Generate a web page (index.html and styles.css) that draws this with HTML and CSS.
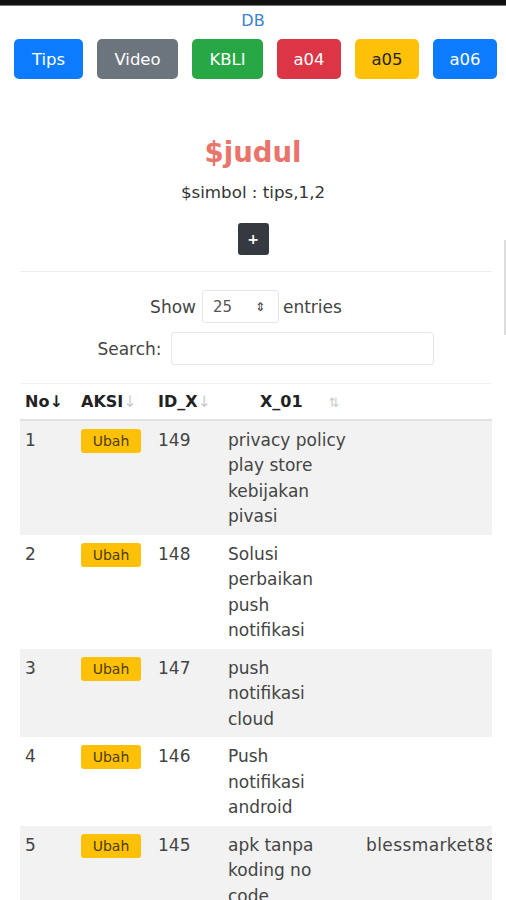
FILE: index.html
```html
<!DOCTYPE html>
<html>
<head>
<meta charset="utf-8">
<link rel="stylesheet" href="styles.css">
</head>
<body>
<div class="topbar"></div>
<div class="scroll-ind"></div>
<div class="page">
  <div class="db">DB</div>
  <nav class="btns">
    <a class="btn b-blue w-tips">Tips</a>
    <a class="btn b-grey w-video">Video</a>
    <a class="btn b-green w-kbli">KBLI</a>
    <a class="btn b-red w-a">a04</a>
    <a class="btn b-yellow w-a">a05</a>
    <a class="btn b-blue w-a">a06</a>
  </nav>
  <h2 class="judul">$judul</h2>
  <p class="simbol">$simbol : tips,1,2</p>
  <div class="plus-wrap"><button class="plus">+</button></div>
  <hr class="sep">
  <div class="length">
    <span>Show</span>
    <div class="select"><span>25</span><span class="caret">&#8661;</span></div>
    <span>entries</span>
  </div>
  <div class="search">
    <span>Search:</span>
    <div class="input"></div>
  </div>
  <div class="table-wrap">
    <table class="tbl">
      <thead>
        <tr>
          <th class="c-no">No<span class="arr on">&#8595;</span></th>
          <th class="c-aksi">AKSI<span class="arr">&#8595;</span></th>
          <th class="c-id">ID_X<span class="arr">&#8595;</span></th>
          <th class="c-x01"><span class="x01">X_01</span><span class="arr both">&#8645;</span></th>
          <th class="c-x02"></th>
        </tr>
      </thead>
      <tbody>
        <tr class="odd">
          <td>1</td><td><span class="badge">Ubah</span></td><td>149</td>
          <td class="txt">privacy policy play store kebijakan pivasi</td><td></td>
        </tr>
        <tr>
          <td>2</td><td><span class="badge">Ubah</span></td><td>148</td>
          <td class="txt">Solusi perbaikan push notifikasi</td><td></td>
        </tr>
        <tr class="odd">
          <td>3</td><td><span class="badge">Ubah</span></td><td>147</td>
          <td class="txt">push notifikasi cloud</td><td></td>
        </tr>
        <tr>
          <td>4</td><td><span class="badge">Ubah</span></td><td>146</td>
          <td class="txt">Push notifikasi android</td><td></td>
        </tr>
        <tr class="odd">
          <td>5</td><td><span class="badge">Ubah</span></td><td>145</td>
          <td class="txt">apk tanpa koding no code</td><td class="nowrap">blessmarket88</td>
        </tr>
      </tbody>
    </table>
  </div>
</div>
</body>
</html>
```

FILE: styles.css
```css
* { box-sizing: border-box; }
html, body { margin: 0; padding: 0; background: #fff; }
body {
  font-family: "DejaVu Sans", "Liberation Sans", sans-serif;
  color: #333;
  width: 506px;
  height: 900px;
  overflow: hidden;
  position: relative;
}
.topbar {
  height: 6px;
  background: #111;
  border-bottom: 1px solid #777;
}
.scroll-ind {
  position: absolute;
  left: 504px;
  top: 240px;
  width: 2px;
  height: 95px;
  background: #ddd;
}
.page { display: flex; flex-direction: column; }
.db {
  text-align: center;
  color: #3b82d6;
  font-size: 16px;
  line-height: 20px;
  margin-top: 5px;
}
.btns {
  display: flex;
  gap: 14px;
  padding-left: 14px;
  margin-top: 8px;
}
.btn {
  height: 40px;
  border-radius: 5px;
  display: flex;
  align-items: center;
  justify-content: center;
  font-size: 16.5px;
  color: #fff;
}
.w-tips { width: 69px; }
.w-video { width: 81px; }
.w-kbli { width: 71px; }
.w-a { width: 64px; }
.b-blue { background: #0d7bfd; }
.b-grey { background: #6c757d; }
.b-green { background: #28a745; }
.b-red { background: #dc3545; }
.b-yellow { background: #ffc107; color: #222; }
.judul {
  margin: 55px 0 0;
  text-align: center;
  font-size: 27.5px;
  line-height: 36px;
  font-weight: 700;
  color: #e8746a;
}
.simbol {
  margin: 10px 0 0;
  text-align: center;
  font-size: 16.7px;
  line-height: 24px;
  color: #333;
}
.plus-wrap { display: flex; justify-content: center; margin-top: 19px; }
.plus {
  width: 31px;
  height: 32px;
  border: 0;
  border-radius: 3px;
  background: #343a40;
  color: #fff;
  font-size: 14px;
  font-weight: 700;
  font-family: inherit;
  padding: 0;
}
.sep {
  margin: 16px 14px 0 20px;
  border: 0;
  border-top: 1px solid #eee;
}
.length {
  display: flex;
  justify-content: center;
  align-items: center;
  margin-top: 18px;
  font-size: 17px;
  color: #444;
  padding-right: 14px;
}
.length .select { margin: 0 4px 0 6px; }
.select {
  width: 77px;
  height: 33px;
  border: 1px solid #e6e6e6;
  border-radius: 3px;
  display: flex;
  align-items: center;
  justify-content: space-between;
  padding: 0 13px 0 10px;
  font-size: 15px;
  color: #555;
}
.caret { font-size: 12px; color: #333; }
.search {
  display: flex;
  justify-content: center;
  align-items: center;
  gap: 9px;
  margin-top: 9px;
  font-size: 17px;
  color: #444;
  padding-left: 25px;
}
.input {
  width: 263px;
  height: 33px;
  border: 1px solid #e6e6e6;
  border-radius: 3px;
}
.table-wrap {
  margin: 18px 14px 0 20px;
  overflow: hidden;
  width: 472px;
}
.tbl {
  border-collapse: collapse;
  font-size: 17px;
  color: #444;
  table-layout: fixed;
  width: 560px;
}
.tbl th {
  text-align: left;
  font-weight: 700;
  color: #222;
  font-size: 16px;
  height: 36px;
  padding: 0 5px;
  border-top: 1px solid #f0f0f0;
  border-bottom: 2px solid #e2e2e2;
  white-space: nowrap;
}
.c-no { width: 56px; }
.c-aksi { width: 77px; }
.c-id { width: 70px; }
.c-x01 { width: 138px; }
.c-x02 { width: 219px; }
.arr { color: #ccc; font-weight: 400; margin-left: 0; }
.arr.on { color: #222; font-weight: 700; }
.x01 { margin-left: 32px; }
.arr.both { margin-left: 26px; font-size: 13px; }
.tbl td {
  vertical-align: top;
  padding: 7px 5px 5px;
  line-height: 25.5px;
}
.tbl td.txt { padding-right: 12px; }
.tbl tr.odd td { background: #f2f2f2; }
.txt { word-wrap: break-word; }
.nowrap { white-space: nowrap; letter-spacing: 0.4px; }
.badge {
  display: inline-block;
  width: 60px;
  height: 24px;
  line-height: 24px;
  margin-top: 1px;
  text-align: center;
  background: #ffc107;
  border-radius: 3px;
  font-size: 14px;
  color: #4a3c00;
}
```
